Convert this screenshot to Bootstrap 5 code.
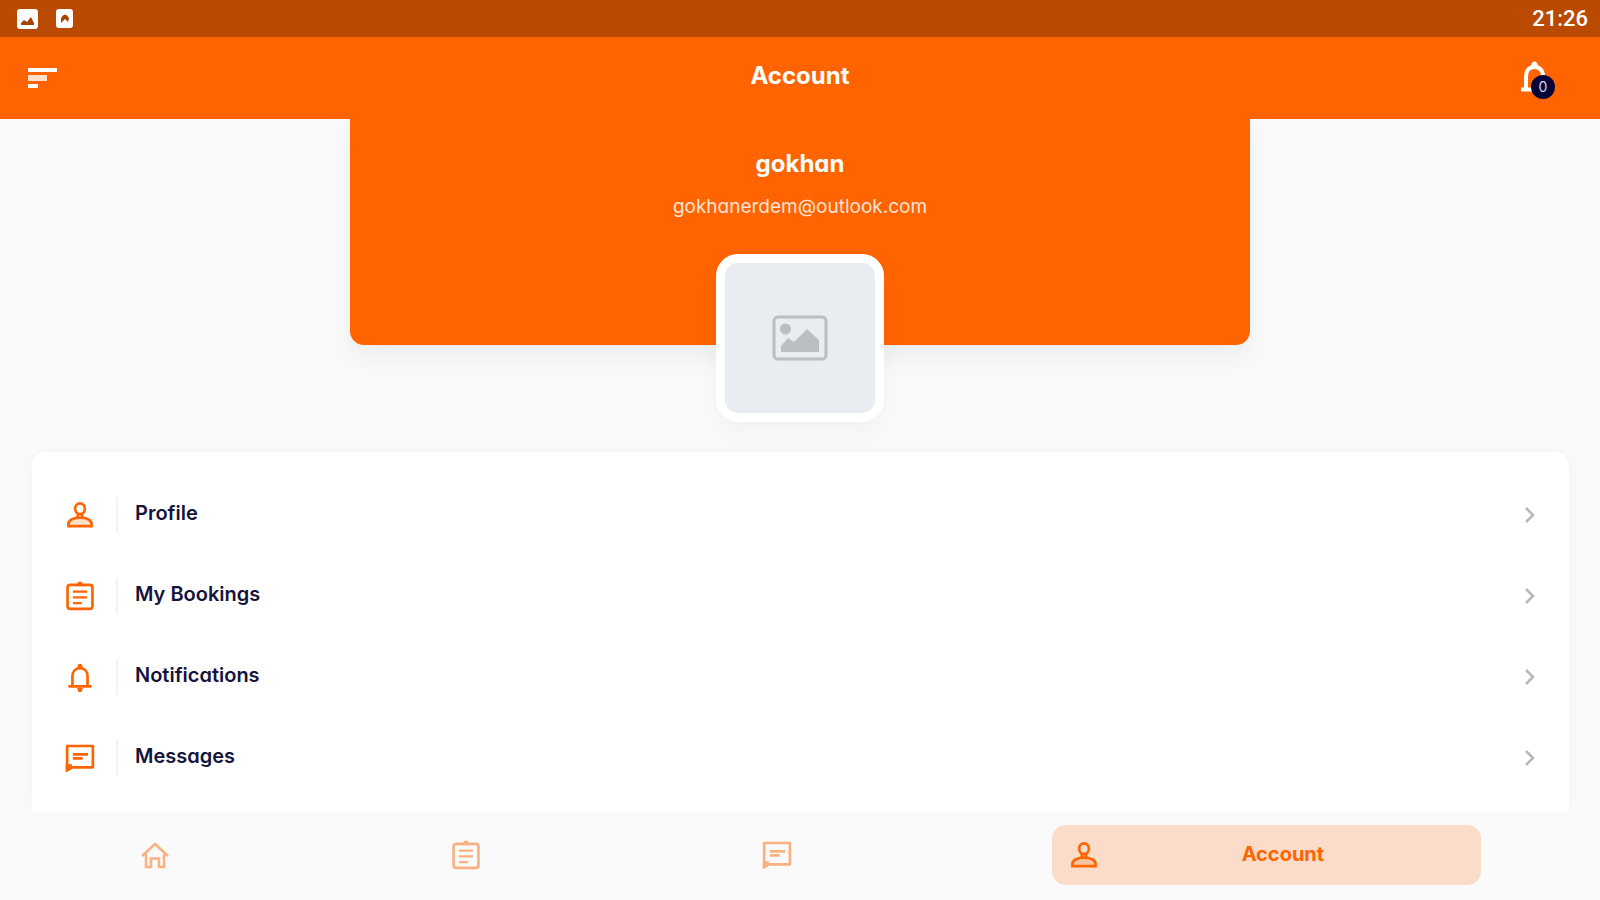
<!DOCTYPE html>
<html lang="en">
<head>
<meta charset="utf-8">
<meta name="viewport" content="width=device-width, initial-scale=1">
<title>Account</title>
<link href="https://cdn.jsdelivr.net/npm/bootstrap@5.3.0/dist/css/bootstrap.min.css" rel="stylesheet">
<style>
  :root { --brand: #ff6400; --brand-dark: #b94a00; --ink: #14143c; --page: #fafafa; }
  body { background: var(--page); color: var(--ink); font-family: Inter, "Open Sans", sans-serif; font-feature-settings: "cv11"; }
  svg { display: block; }
  .status-bar { background: var(--brand-dark); height: 37px; padding: 0 12px 0 16px; }
  .clock { font: 500 22px/24px Roboto, sans-serif; }
  .app-bar { background: var(--brand); height: 82px; padding: 0 28px; position: relative; z-index: 1; }
  .bar-btn { background: none; border: 0; padding: 0; color: #fff; }
  .bell-btn { width: 52px; }
  .bell-count { position: absolute; left: 11px; top: 15px; width: 24px; height: 24px; border-radius: 50%; background: #04043a; color: #d5d5e2; font-size: 14px; line-height: 24px; }
  .page-title, .user-name { font-size: 24px; line-height: 28px; font-weight: 700; }
  .hero { background: var(--brand); max-width: 900px; border-radius: 0 0 14px 14px; padding-top: 31px; box-shadow: 0 12px 24px rgba(40, 70, 70, .07); }
  .user-mail { font-size: 19px; line-height: 28px; color: #ffe3d4; margin-top: 15px; margin-bottom: 33px; }
  .avatar-frame { width: 168px; height: 168px; border: 9px solid #fff; border-radius: 22px; background: #e9edf1; margin-bottom: -77px; box-shadow: 0 8px 20px rgba(40, 70, 70, .05); }
  .menu-card { margin: 107px 31px 0 32px; padding: 22px 33px 14px 32px; background: #fff; border-radius: 14px 14px 0 0; box-shadow: 0 0 18px rgba(0, 0, 0, .03); }
  .menu-row { height: 81px; color: var(--ink); text-decoration: none; }
  .menu-icon { color: var(--brand); }
  .menu-rule { width: 2px; height: 36px; background: #f2f2f4; margin: 0 17px 0 20px; }
  .menu-label { font-size: 20px; line-height: 24px; font-weight: 600; padding-bottom: 4px; }
  .bottom-nav { background: var(--page); height: 88px; padding-bottom: 2px; position: relative; }
  .tab-link { height: 60px; padding: 0 20px 0 18px; color: #f9b184; text-decoration: none; }
  .tab-link.current { width: 429px; padding: 0 16px; background: #fadcc8; color: var(--brand); border-radius: 14px; font-size: 20px; font-weight: 700; }
  .tab-link.current span { padding-bottom: 2px; }
</style>
</head>
<body>
<svg class="d-none" xmlns="http://www.w3.org/2000/svg">
  <symbol id="i-user" viewBox="0 0 36 36"><g fill="none" stroke="currentColor" stroke-width="3"><ellipse cx="18" cy="11" rx="5.500" ry="6"/><path d="M15.500 16.500v4M20.500 16.500v4"/><path d="M5 30.500V28c0-4.500 6-7 13-7s13 2.500 13 7v2.500z" fill="currentColor" fill-opacity=".2"/></g></symbol>
  <symbol id="i-clip" viewBox="0 0 36 36"><g fill="none" stroke="currentColor" stroke-width="3"><rect x="4" y="5.500" width="28" height="27" rx="3"/><path d="M10 13h16M10 19.500h16M10 26h10" stroke-width="2.500"/></g><path d="M12 7q3-1 4-5h4q1 4 4 5z" fill="currentColor"/></symbol>
  <symbol id="i-bell" viewBox="0 0 36 36"><path d="M5 28.500h26M9.500 28V17.500c0-6 3.500-9.500 8.500-9.500s8.500 3.500 8.500 9.500V28" fill="none" stroke="currentColor" stroke-width="3"/><path d="M15 8a3 5 0 0 1 6 0zM15 30h6a3 5 0 0 1-6 0z" fill="currentColor"/></symbol>
  <symbol id="i-chat" viewBox="0 0 36 36"><path d="M3.500 32V4.500h29v24H9z" fill="none" stroke="currentColor" stroke-width="3" stroke-linejoin="round"/><path d="M2 34V25h7l-1 5z" fill="currentColor"/><path d="M10 14h17M10 18.500h11" stroke="currentColor" stroke-width="3"/></symbol>
  <symbol id="i-home" viewBox="0 0 36 36"><path d="M5 19 18 7l13 12M9 17v13h5v-8.500h8V30h5V17" fill="none" stroke="currentColor" stroke-width="2.500"/></symbol>
  <symbol id="i-next" viewBox="0 0 12 18"><path d="m2 2 7 7-7 7" fill="none" stroke="currentColor" stroke-width="2.500"/></symbol>
</svg>

<div class="d-flex flex-column min-vh-100">
  <div class="status-bar d-flex align-items-center justify-content-between text-white">
    <div class="d-flex align-items-center">
      <svg width="24" height="22" viewBox="0 0 24 22"><rect x="1" y="1" width="21" height="20" rx="3" fill="#fff"/><path d="M5 17v-2l3-3 3 2 4-5 3 6v2z" fill="#a84300"/></svg>
      <svg class="ms-3" width="18" height="20" viewBox="0 0 18 20"><rect width="17" height="19" rx="3" fill="#fff"/><path d="M5 14V9q4-7 8 0l-1 4-3-3z" fill="#a84300"/></svg>
    </div>
    <span class="clock">21:26</span>
  </div>

  <header class="app-bar d-flex align-items-center text-white">
    <div class="col d-flex">
      <button class="bar-btn" type="button" aria-label="Menu">
        <svg width="30" height="24" viewBox="0 0 30 24"><path d="M0 2h29v4H0zM0 18h10v4H0z" fill="#fff"/><path d="M0 9h19v6H0z" fill="#ffe0cc"/></svg>
      </button>
    </div>
    <h1 class="page-title m-0 pb-1">Account</h1>
    <div class="col d-flex justify-content-end">
      <button class="bar-btn bell-btn position-relative" type="button" aria-label="Notifications">
        <svg width="34" height="36" viewBox="0 1 34 36"><path d="M1 30.500h24M6 30V17.500c0-6 3-9.500 8.500-9.500s8.500 3.500 8.500 9.500V30" fill="none" stroke="#fff" stroke-width="4"/><path d="M11 7.500a3.500 5 0 0 1 7 0z" fill="#fff"/></svg>
        <span class="bell-count">0</span>
      </button>
    </div>
  </header>

  <main class="flex-fill">
    <section class="hero w-100 mx-auto d-flex flex-column align-items-center text-white">
      <h2 class="user-name m-0">gokhan</h2>
      <p class="user-mail">gokhanerdem@outlook.com</p>
      <div class="avatar-frame d-flex align-items-center justify-content-center">
        <svg width="56" height="46" viewBox="0 0 56 46"><rect x="2" y="2" width="52" height="42" rx="4" fill="none" stroke="#bcbfc1" stroke-width="3"/><circle cx="13.500" cy="14" r="5.500" fill="#bcbfc1"/><path d="M9 37v-6l7-8 6 4 13-13 12 11v12z" fill="#bcbfc1"/></svg>
      </div>
    </section>

    <nav class="menu-card" aria-label="Account menu">
      <a class="menu-row d-flex align-items-center" href="#profile"><svg class="menu-icon" width="32" height="32"><use href="#i-user"/></svg><span class="menu-rule"></span><span class="menu-label flex-fill">Profile</span><svg width="12" height="18" color="#b3b8bd"><use href="#i-next"/></svg></a>
      <a class="menu-row d-flex align-items-center" href="#bookings"><svg class="menu-icon" width="32" height="32"><use href="#i-clip"/></svg><span class="menu-rule"></span><span class="menu-label flex-fill">My Bookings</span><svg width="12" height="18" color="#b3b8bd"><use href="#i-next"/></svg></a>
      <a class="menu-row d-flex align-items-center" href="#notifications"><svg class="menu-icon" width="32" height="32"><use href="#i-bell"/></svg><span class="menu-rule"></span><span class="menu-label flex-fill">Notifications</span><svg width="12" height="18" color="#b3b8bd"><use href="#i-next"/></svg></a>
      <a class="menu-row d-flex align-items-center" href="#messages"><svg class="menu-icon" width="32" height="32"><use href="#i-chat"/></svg><span class="menu-rule"></span><span class="menu-label flex-fill">Messages</span><svg width="12" height="18" color="#b3b8bd"><use href="#i-next"/></svg></a>
    </nav>
  </main>

  <nav class="bottom-nav d-flex align-items-center justify-content-around" aria-label="Main">
    <a class="tab-link d-flex align-items-center" href="#home" aria-label="Home"><svg width="36" height="36"><use href="#i-home"/></svg></a>
    <a class="tab-link d-flex align-items-center" href="#bookings" aria-label="Bookings"><svg width="36" height="32"><use href="#i-clip"/></svg></a>
    <a class="tab-link d-flex align-items-center" href="#messages" aria-label="Messages"><svg width="36" height="32"><use href="#i-chat"/></svg></a>
    <a class="tab-link current d-flex align-items-center" href="#account" aria-current="page"><svg width="32" height="32"><use href="#i-user"/></svg><span class="flex-fill text-center">Account</span></a>
  </nav>
</div>
<script src="https://cdn.jsdelivr.net/npm/bootstrap@5.3.0/dist/js/bootstrap.bundle.min.js"></script>
</body>
</html>
